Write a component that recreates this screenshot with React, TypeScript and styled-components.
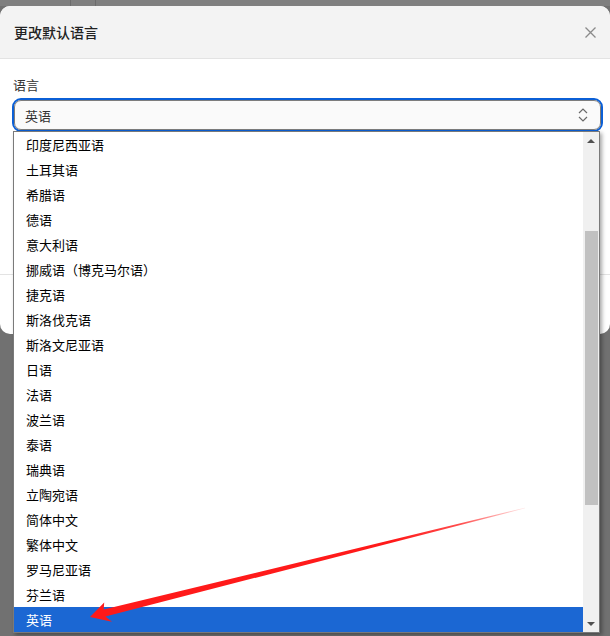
import React from "react";
import styled, { createGlobalStyle } from "styled-components";

const GlobalStyle = createGlobalStyle`
  html, body { margin: 0; padding: 0; }
  body {
    font-family: "Noto Sans CJK SC", "Noto Sans", "Liberation Sans", sans-serif;
    background: #727272;
  }
  * { box-sizing: border-box; }
`;

const Page = styled.div`
  position: relative;
  width: 610px;
  height: 636px;
  overflow: hidden;
  background: #717171;
`;

const TopStrip = styled.div`
  height: 6px;
  background:
    linear-gradient(to right, transparent 70px, #6c6c6c 70px, #6c6c6c 71px, transparent 71px),
    linear-gradient(to right, transparent 95px, #6c6c6c 95px, #6c6c6c 96px, transparent 96px),
    #7f7f7f;
`;

const Modal = styled.div`
  width: 610px;
  height: 328px;
  background: #ffffff;
  border-radius: 10px;
  display: flex;
  flex-direction: column;
  overflow: hidden;
`;

const Header = styled.div`
  height: 53px;
  flex: none;
  background: #f3f3f3;
  border-bottom: 1px solid #e3e3e3;
  display: flex;
  align-items: center;
  justify-content: space-between;
  padding: 0 14px 0 14px;
`;

const Title = styled.div`
  font-size: 14px;
  font-weight: 500;
  color: #222;
  line-height: 20px;
`;

const CloseBtn = styled.div`
  width: 12px;
  height: 12px;
  display: flex;
  align-items: center;
  justify-content: center;
`;

const Body = styled.div`
  flex: 1;
  padding: 18px 7px 0 12px;
  display: flex;
  flex-direction: column;
`;

const Label = styled.div`
  font-size: 13px;
  color: #333;
  line-height: 16px;
  height: 16px;
  padding-left: 1px;
  margin-bottom: 5px;
`;

const SelectRing = styled.div`
  height: 34px;
  border: 2px solid #0b5fd6;
  border-radius: 9px;
`;

const SelectInner = styled.div`
  height: 100%;
  border: 1px solid #7d7d7d;
  border-radius: 7px;
  background: #fafafa;
  display: flex;
  align-items: center;
  justify-content: space-between;
  padding: 0 12px 0 10px;
  font-size: 13px;
  color: #333;
`;

const Footer = styled.div`
  height: 60px;
  flex: none;
  border-top: 1px solid #e3e3e3;
`;

const Dropdown = styled.div`
  position: absolute;
  top: 131px;
  left: 13px;
  width: 587px;
  height: 502px;
  border: 1px solid #7a7a7a;
  background: #fff;
  display: flex;
  box-shadow: 2px 2px 4px rgba(0, 0, 0, 0.35);
`;

const Items = styled.div`
  flex: 1;
  display: flex;
  flex-direction: column;
`;

const Item = styled.div<{ $selected?: boolean }>`
  height: 25px;
  flex: none;
  display: flex;
  align-items: center;
  padding-left: 12px;
  font-size: 13px;
  color: ${(p) => (p.$selected ? "#ffffff" : "#000000")};
  background: ${(p) => (p.$selected ? "#1b67d3" : "transparent")};
`;

const Scrollbar = styled.div`
  width: 16px;
  flex: none;
  background: #f0f0f0;
  display: flex;
  flex-direction: column;
`;

const ArrowButton = styled.div`
  height: 17px;
  flex: none;
  display: flex;
  align-items: center;
  justify-content: center;
`;

const Triangle = styled.div<{ $dir: "up" | "down" }>`
  width: 0;
  height: 0;
  border-left: 4px solid transparent;
  border-right: 4px solid transparent;
  ${(p) =>
    p.$dir === "up"
      ? "border-bottom: 4px solid #505050;"
      : "border-top: 4px solid #505050;"}
`;

const Track = styled.div`
  flex: 1;
  padding: 82px 1px 0 2px;
`;

const Thumb = styled.div`
  height: 274px;
  background: #c1c1c1;
`;

const ArrowOverlay = styled.svg`
  position: absolute;
  top: 0;
  left: 0;
  pointer-events: none;
`;

const languages = [
  "印度尼西亚语",
  "土耳其语",
  "希腊语",
  "德语",
  "意大利语",
  "挪威语（博克马尔语）",
  "捷克语",
  "斯洛伐克语",
  "斯洛文尼亚语",
  "日语",
  "法语",
  "波兰语",
  "泰语",
  "瑞典语",
  "立陶宛语",
  "简体中文",
  "繁体中文",
  "罗马尼亚语",
  "芬兰语",
  "英语",
];

export default function App() {
  return (
    <>
      <GlobalStyle />
      <Page>
        <TopStrip />
        <Modal>
          <Header>
            <Title>更改默认语言</Title>
            <CloseBtn>
              <svg width="11" height="11" viewBox="0 0 11 11">
                <path d="M0.5 0.5 L10.5 10.5 M10.5 0.5 L0.5 10.5" stroke="#8a8a8a" strokeWidth="1.3" fill="none" />
              </svg>
            </CloseBtn>
          </Header>
          <Body>
            <Label>语言</Label>
            <SelectRing>
              <SelectInner>
                <span>英语</span>
                <svg width="10" height="14" viewBox="0 0 10 14">
                  <path d="M1 5 L5 1 L9 5 M1 9 L5 13 L9 9" stroke="#6a6a6a" strokeWidth="1.2" fill="none" />
                </svg>
              </SelectInner>
            </SelectRing>
          </Body>
          <Footer />
        </Modal>
        <Dropdown>
          <Items>
            {languages.map((l, i) => (
              <Item key={l} $selected={i === languages.length - 1}>
                {l}
              </Item>
            ))}
          </Items>
          <Scrollbar>
            <ArrowButton>
              <Triangle $dir="up" />
            </ArrowButton>
            <Track>
              <Thumb />
            </Track>
            <ArrowButton>
              <Triangle $dir="down" />
            </ArrowButton>
          </Scrollbar>
        </Dropdown>
        <ArrowOverlay width="610" height="636" viewBox="0 0 610 636">
          <defs>
            <linearGradient id="arrowGrad" x1="525" y1="508" x2="90" y2="617" gradientUnits="userSpaceOnUse">
              <stop offset="0" stopColor="#ff2020" stopOpacity="0.1" />
              <stop offset="0.15" stopColor="#ff2020" stopOpacity="0.8" />
              <stop offset="0.3" stopColor="#ff1a1a" stopOpacity="1" />
              <stop offset="1" stopColor="#ff1a1a" stopOpacity="1" />
            </linearGradient>
          </defs>
          <polygon
            points="524.9,507.7 103.7,609.6 104.2,602.4 90,617 112.0,621.8 105.4,616.4 525.1,508.3"
            fill="url(#arrowGrad)"
          />
        </ArrowOverlay>
      </Page>
    </>
  );
}
